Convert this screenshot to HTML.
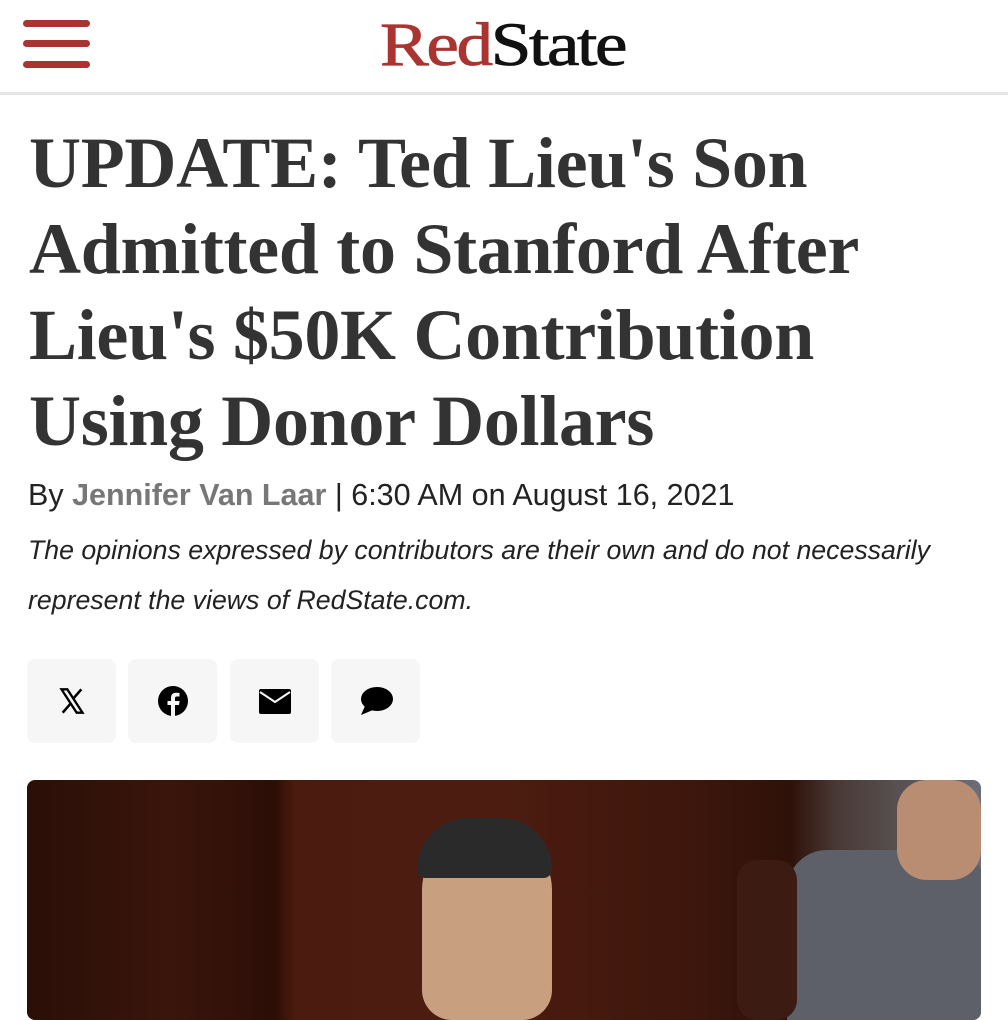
<!DOCTYPE html>
<html><head><style>
body{margin:0;width:1008px;height:1008px;overflow:hidden;background:#fff;font-family:"Liberation Sans",sans-serif;position:relative}
.hdr{position:absolute;left:0;top:0;width:1008px;height:92px;border-bottom:3px solid #e4e4e4}
.bar{position:absolute;left:23px;width:67px;height:7px;border-radius:4px;background:#a93431}
.logo{position:absolute;left:380px;top:11px;font-family:"Liberation Serif",serif;font-size:61px;letter-spacing:-2px;transform:scaleX(1.2);transform-origin:left;-webkit-text-stroke:0.8px currentColor}
h1{position:absolute;left:29px;top:120px;margin:0;font-family:"Liberation Serif",serif;font-weight:bold;font-size:72px;letter-spacing:-0.3px;line-height:86px;color:#333;width:960px}
.by{position:absolute;left:28px;top:478px;font-size:30.5px;color:#222}
.by b{color:#777;font-weight:bold}
.dis{position:absolute;left:28px;top:525px;font-size:26.7px;line-height:50px;font-style:italic;color:#222;width:960px}
.btn{position:absolute;top:659px;width:89px;height:84px;background:#f6f6f6;border-radius:8px;display:flex;align-items:center;justify-content:center}
.photo{position:absolute;left:27px;top:780px;width:954px;height:240px;border-radius:8px;overflow:hidden;background:linear-gradient(90deg,#2a0f08 0%,#3a150b 15%,#2c0e07 26%,#4a1b0e 28%,#4c1c10 50%,#3d160c 70%,#2e1109 80%,#4a3a36 85%,#6b6e78 100%)}
</style></head><body>
<div class="hdr">
<div class="bar" style="top:20px"></div><div class="bar" style="top:40px"></div><div class="bar" style="top:61px"></div>
<div class="logo"><span style="color:#a93431">Red</span><span style="color:#111">State</span></div>
</div>
<h1>UPDATE: Ted Lieu's Son Admitted to Stanford After Lieu's $50K Contribution Using Donor Dollars</h1>
<div class="by">By <b>Jennifer Van Laar</b> | 6:30 AM on August 16, 2021</div>
<div class="dis">The opinions expressed by contributors are their own and do not necessarily represent the views of RedState.com.</div>
<div class="btn" style="left:27px"><svg width="30" height="28" viewBox="0 0 24 24"><path d="M3 2h5l13 20h-5z" fill="none" stroke="#000" stroke-width="2"/><path d="M20 2L13.5 9.5M4 22l6.8-7.8" stroke="#000" stroke-width="2.2"/></svg></div>
<div class="btn" style="left:128px"><svg width="32" height="32" viewBox="0 0 32 32"><circle cx="16" cy="16" r="15" fill="#000"/><path d="M18 31V20h4l.6-4H18v-2.5c0-1.2.4-2 2-2h2.5V8c-.5 0-2-.2-3.5-.2-3.3 0-5 1.8-5 5.2V16h-3.5v4H14v11z" fill="#f6f6f6"/></svg></div>
<div class="btn" style="left:230px"><svg width="32" height="25" viewBox="0 0 32 25"><rect x="0" y="0" width="32" height="25" rx="2" fill="#000"/><path d="M1 3l15 10 15-10" fill="none" stroke="#f6f6f6" stroke-width="2"/></svg></div>
<div class="btn" style="left:331px"><svg width="34" height="30" viewBox="0 0 34 30"><ellipse cx="18" cy="13" rx="16" ry="12" fill="#000"/><path d="M6 20L2 29l12-5z" fill="#000"/></svg></div>
<div class="photo">
<div style="position:absolute;left:395px;top:50px;width:130px;height:190px;border-radius:60px 60px 30px 30px;background:#c9a07f"></div>
<div style="position:absolute;left:390px;top:38px;width:135px;height:60px;border-radius:60px 60px 10px 10px;background:#2a2a2a"></div>
<div style="position:absolute;left:760px;top:70px;width:200px;height:180px;border-radius:40px 40px 0 0;background:#5d6068"></div>
<div style="position:absolute;left:870px;top:0;width:84px;height:100px;border-radius:30px;background:#b98d72"></div>
<div style="position:absolute;left:710px;top:80px;width:60px;height:160px;border-radius:20px;background:#3c1c12"></div>
</div>
</body></html>
